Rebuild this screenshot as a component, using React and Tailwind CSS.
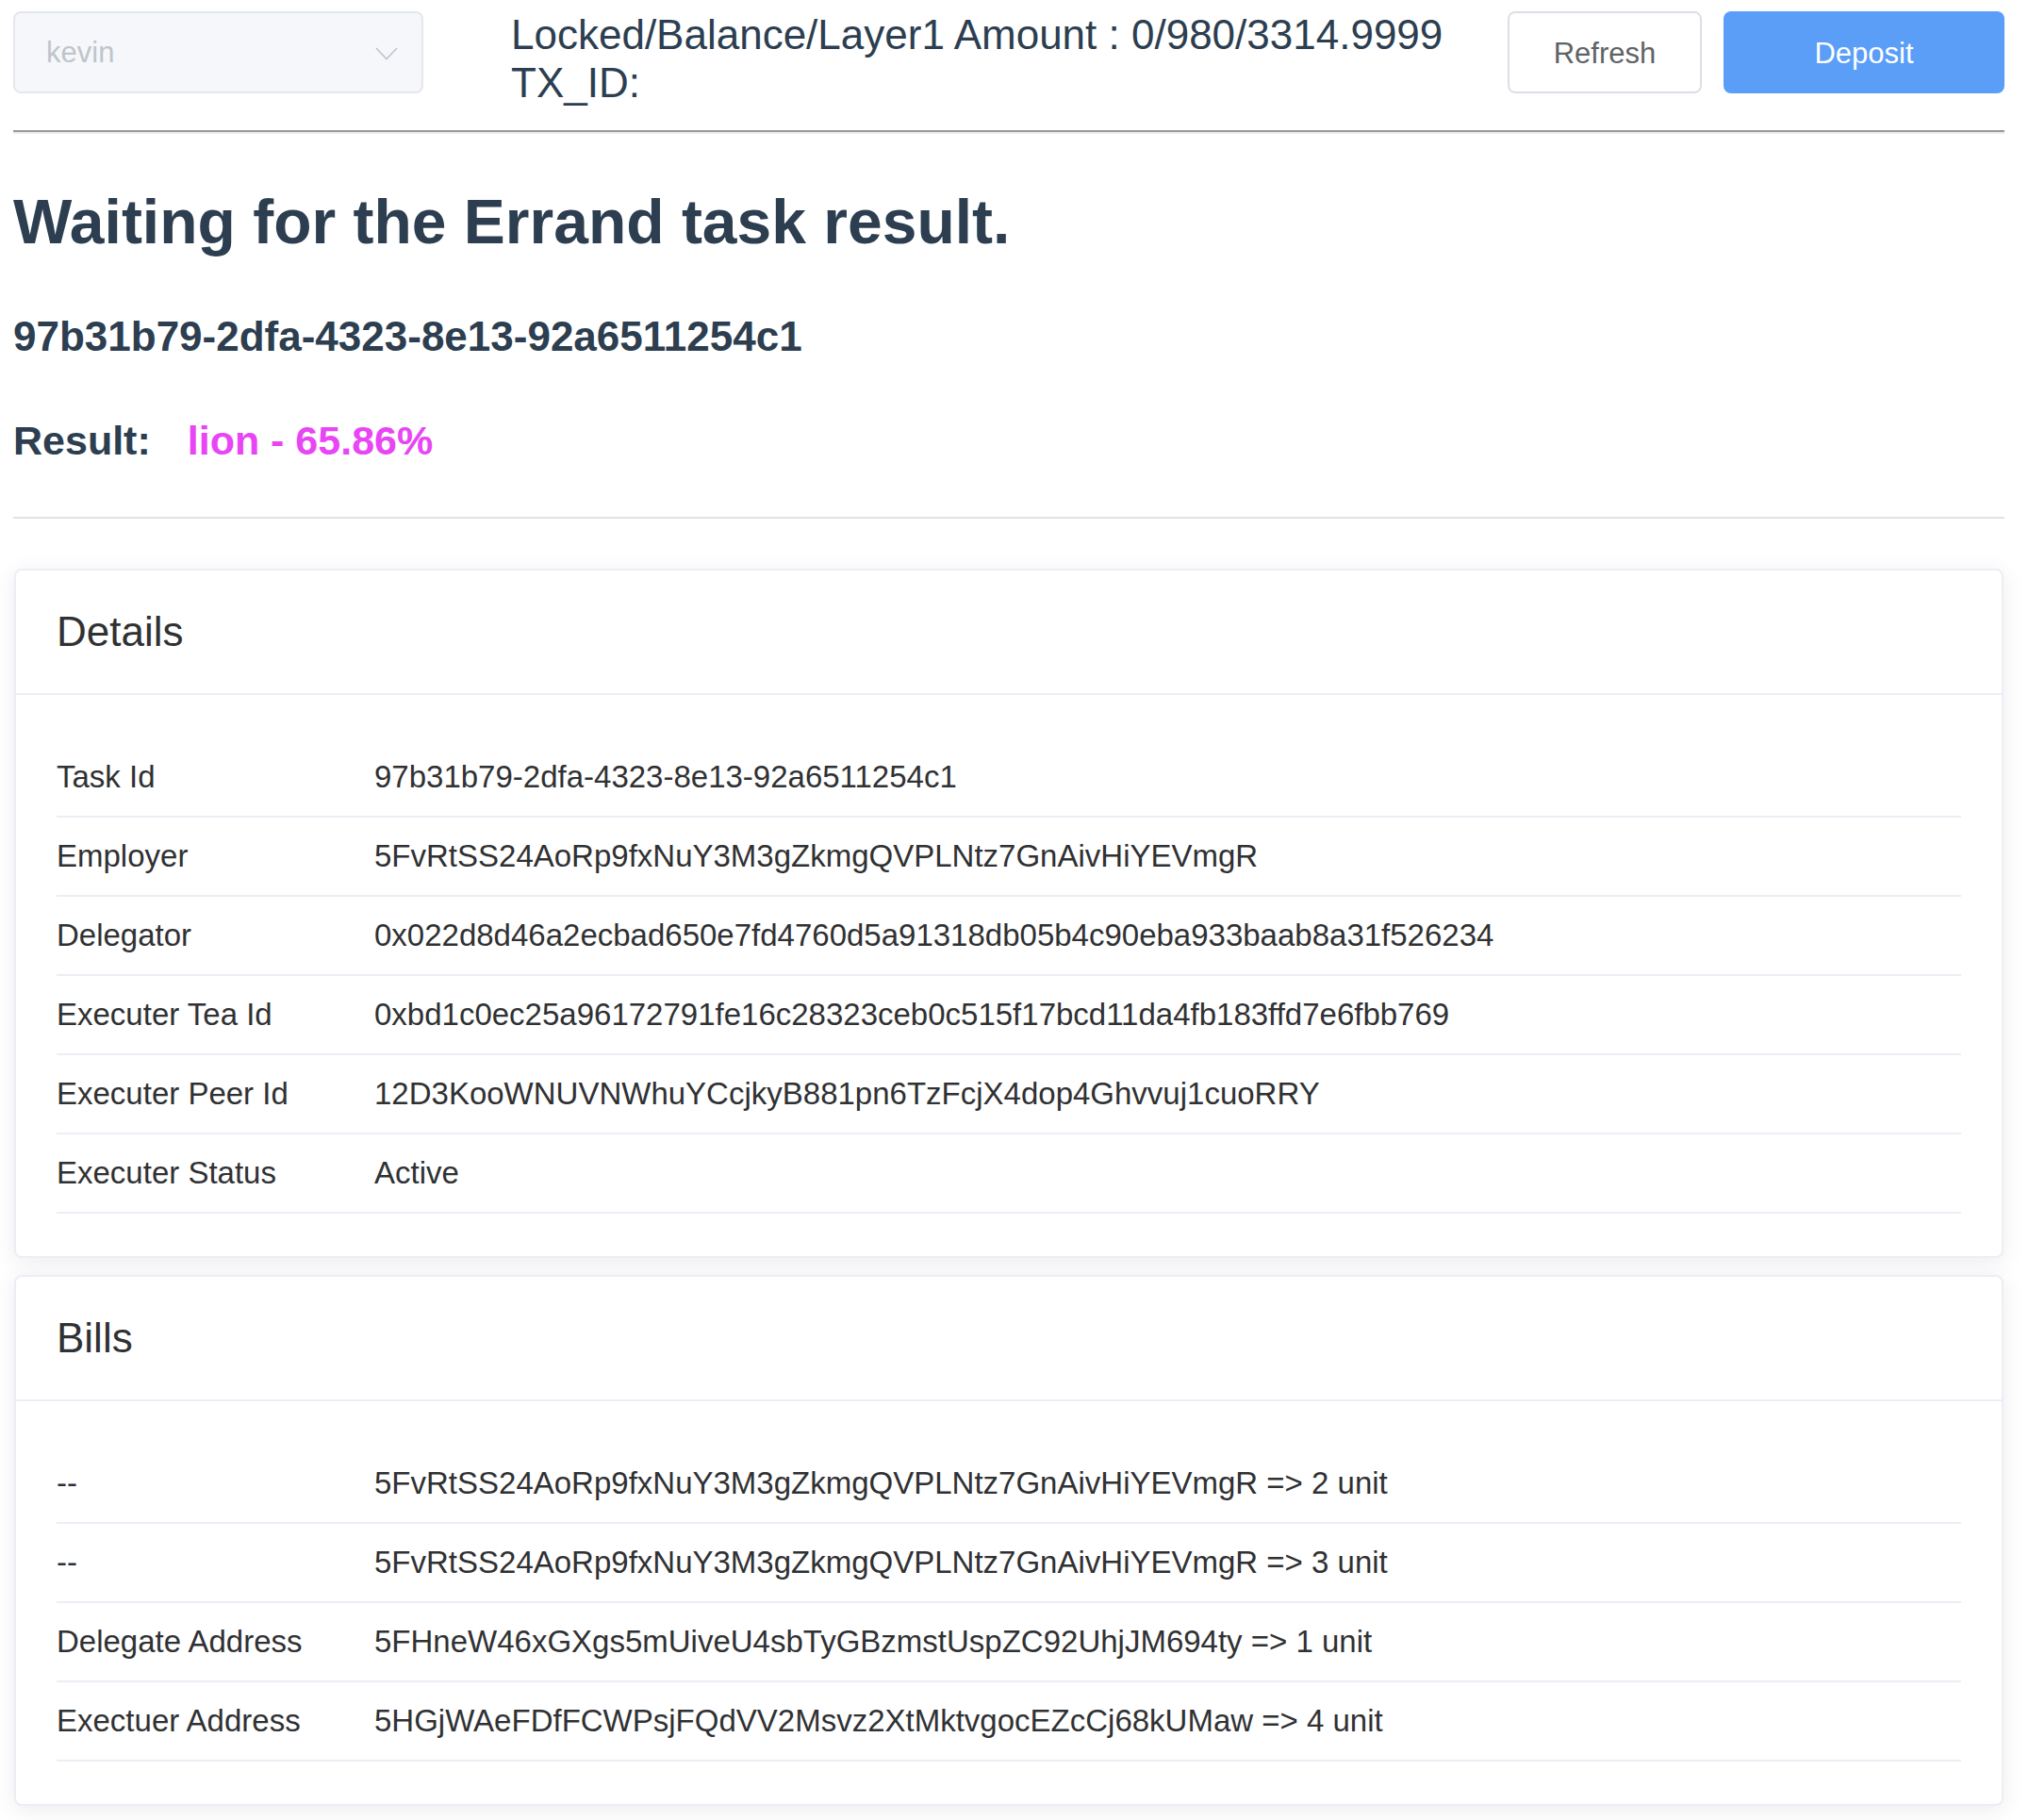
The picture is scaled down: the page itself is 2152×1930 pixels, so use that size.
const DETAILS = [
  ["Task Id", "97b31b79-2dfa-4323-8e13-92a6511254c1"],
  ["Employer", "5FvRtSS24AoRp9fxNuY3M3gZkmgQVPLNtz7GnAivHiYEVmgR"],
  ["Delegator", "0x022d8d46a2ecbad650e7fd4760d5a91318db05b4c90eba933baab8a31f526234"],
  ["Executer Tea Id", "0xbd1c0ec25a96172791fe16c28323ceb0c515f17bcd11da4fb183ffd7e6fbb769"],
  ["Executer Peer Id", "12D3KooWNUVNWhuYCcjkyB881pn6TzFcjX4dop4Ghvvuj1cuoRRY"],
  ["Executer Status", "Active"],
];

const BILLS = [
  ["--", "5FvRtSS24AoRp9fxNuY3M3gZkmgQVPLNtz7GnAivHiYEVmgR => 2 unit"],
  ["--", "5FvRtSS24AoRp9fxNuY3M3gZkmgQVPLNtz7GnAivHiYEVmgR => 3 unit"],
  ["Delegate Address", "5FHneW46xGXgs5mUiveU4sbTyGBzmstUspZC92UhjJM694ty => 1 unit"],
  ["Exectuer Address", "5HGjWAeFDfFCWPsjFQdVV2Msvz2XtMktvgocEZcCj68kUMaw => 4 unit"],
];

function InfoCard({ title, rows }) {
  return (
    <div className="bg-white border-2 border-[#ebeef5] rounded-[8px] shadow-[0_4px_24px_rgba(0,0,0,0.08)] overflow-hidden">
      {/* card header */}
      <div className="px-[43px] pt-[39px] pb-[40px] border-b-2 border-[#ebeef5]">
        <div className="text-[44px] leading-[51px] text-[#303133]">{title}</div>
      </div>
      {/* card body */}
      <div className="px-[43px] pt-[46px] pb-[45px]">
        {rows.map(([label, value], i) => (
          <div key={i} className="flex py-[21px] border-b-2 border-[#ebeef5] text-[33px] leading-[40px] text-[#303133]">
            <div className="w-[337px] shrink-0">{label}</div>
            <div className="whitespace-nowrap">{value}</div>
          </div>
        ))}
      </div>
    </div>
  );
}

export default function App() {
  return (
    <div
      className="min-h-screen bg-white pl-[14px] pr-[26px] pb-[18px]"
      style={{ fontFamily: '"Liberation Sans", Arial, sans-serif' }}
    >
      {/* top bar */}
      <div className="flex items-start pt-[12px]">
        <div className="w-[435px] h-[87px] shrink-0 flex items-center justify-between bg-[#f5f7fa] border-2 border-[#e4e7ed] rounded-[8px] pl-[33px] pr-[25px]">
          <span className="text-[31px] text-[#c0c4cc] pt-[2px]">kevin</span>
          <svg width="24" height="14" viewBox="0 0 24 14" fill="none" className="mt-[2px]">
            <polyline points="1,1 12,12.5 23,1" stroke="#c0c4cc" strokeWidth="1.6" />
          </svg>
        </div>
        <div className="flex-1 ml-[93px] -mt-[1px] text-[44px] leading-[51px] text-[#2c3e50]">
          <div>Locked/Balance/Layer1 Amount : 0/980/3314.9999</div>
          <div>TX_ID:</div>
        </div>
        <button className="w-[206px] h-[87px] shrink-0 pt-[3px] bg-white border-2 border-[#dcdfe6] rounded-[8px] text-[31px] text-[#606266]">
          Refresh
        </button>
        <button className="w-[298px] h-[87px] shrink-0 pt-[3px] ml-[23px] bg-[#5a9ef8] rounded-[8px] text-[31px] text-white">
          Deposit
        </button>
      </div>

      <div className="mt-[25px] border-t-2 border-[#9a9a9a] border-b-2 border-b-[#ececec]" />

      <h1 className="mt-[56px] text-[66px] leading-[75px] font-bold text-[#2c3e50]">
        Waiting for the Errand task result.
      </h1>
      <h3 className="mt-[59px] text-[44px] leading-[50px] font-bold text-[#2c3e50]">
        97b31b79-2dfa-4323-8e13-92a6511254c1
      </h3>
      <div className="mt-[60px] text-[43px] leading-[50px] font-bold text-[#2c3e50] flex">
        <span>Result:</span>
        <span className="ml-[39px] text-[#e845f5]">lion - 65.86%</span>
      </div>

      <div className="mt-[56px] border-t-2 border-[#e0e2e8]" />

      <div className="mt-[53px] mx-[1px] flex flex-col gap-[18px]">
        <InfoCard title="Details" rows={DETAILS} />
        <InfoCard title="Bills" rows={BILLS} />
      </div>
    </div>
  );
}
